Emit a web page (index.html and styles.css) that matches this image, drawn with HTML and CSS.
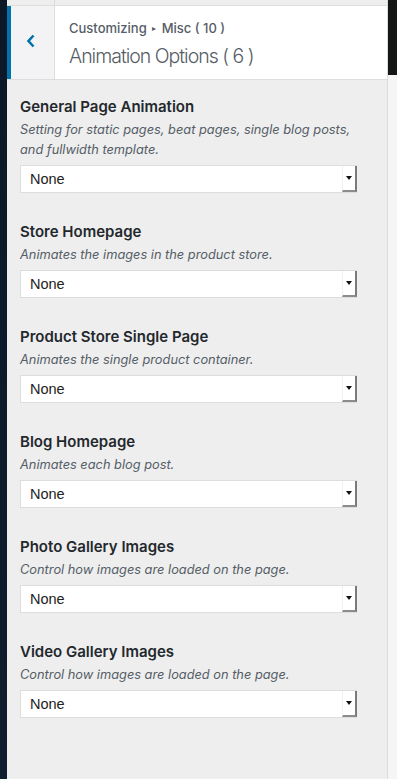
FILE: index.html
```html
<!DOCTYPE html>
<html>
<head>
<meta charset="utf-8">
<link rel="stylesheet" href="styles.css">
</head>
<body>
<div class="frame">
  <div class="edge"></div>
  <div class="panel">
    <div class="topstrip"><div class="topstrip-btn"></div></div>
    <div class="header">
      <button class="back" aria-label="Back">
        <svg width="10" height="14" viewBox="0 0 10 14"><path d="M7.5 1.5 L2.5 7 L7.5 12.5" fill="none" stroke="#0073aa" stroke-width="2.6"/></svg>
      </button>
      <div class="titles">
        <div class="crumb">Customizing <span class="sep">▸</span> Misc ( 10 )</div>
        <div class="title">Animation Options ( 6 )</div>
      </div>
    </div>
    <div class="controls">
      <div class="control">
        <div class="c-title">General Page Animation</div>
        <div class="c-desc">Setting for static pages, beat pages, single blog posts, and fullwidth template.</div>
        <div class="select"><span class="val">None</span><span class="arrow"><i></i></span></div>
      </div>
      <div class="control">
        <div class="c-title">Store Homepage</div>
        <div class="c-desc">Animates the images in the product store.</div>
        <div class="select"><span class="val">None</span><span class="arrow"><i></i></span></div>
      </div>
      <div class="control">
        <div class="c-title">Product Store Single Page</div>
        <div class="c-desc">Animates the single product container.</div>
        <div class="select"><span class="val">None</span><span class="arrow"><i></i></span></div>
      </div>
      <div class="control">
        <div class="c-title">Blog Homepage</div>
        <div class="c-desc">Animates each blog post.</div>
        <div class="select"><span class="val">None</span><span class="arrow"><i></i></span></div>
      </div>
      <div class="control">
        <div class="c-title">Photo Gallery Images</div>
        <div class="c-desc">Control how images are loaded on the page.</div>
        <div class="select"><span class="val">None</span><span class="arrow"><i></i></span></div>
      </div>
      <div class="control">
        <div class="c-title">Video Gallery Images</div>
        <div class="c-desc">Control how images are loaded on the page.</div>
        <div class="select"><span class="val">None</span><span class="arrow"><i></i></span></div>
      </div>
    </div>
  </div>
  <div class="side">
    <div class="side-dark"></div>
  </div>
</div>
</body>
</html>
```

FILE: styles.css
```css
* { box-sizing: border-box; }
html, body { margin: 0; padding: 0; }
body {
  width: 397px;
  height: 779px;
  overflow: hidden;
  font-family: Inter, "Open Sans", sans-serif;
  background: #eeeeee;
}
.frame {
  display: flex;
  height: 779px;
}
.edge {
  width: 7px;
  flex: none;
  background: linear-gradient(#0c1828, #101d2e);
}
.panel {
  width: 381px;
  flex: none;
  background: #eeeeee;
  border-right: 1px solid #dcdcdc;
  display: flex;
  flex-direction: column;
}
.topstrip {
  height: 6px;
  border-bottom: 1px solid #dddddd;
  display: flex;
}
.topstrip-btn {
  width: 48px;
  border-right: 1px solid #dddddd;
}
.header {
  height: 74px;
  display: flex;
  background: #ffffff;
  border-bottom: 1px solid #dddddd;
}
.back {
  width: 48px;
  flex: none;
  border: 0;
  border-left: 4px solid #0073aa;
  border-right: 1px solid #dddddd;
  background: #f3f3f5;
  padding: 0 4px 0 0;
  margin: 0;
  display: flex;
  align-items: center;
  justify-content: center;
}
.back svg { display: block; margin-top: -4px; }
.titles {
  padding: 12px 0 0 14px;
  color: #555d66;
}
.crumb {
  font-size: 13px;
  line-height: 20px;
  font-weight: 500;
  color: #555d66;
}
.crumb .sep { font-size: 8px; position: relative; top: -2px; padding: 0 2px; }
.title {
  font-size: 19.5px;
  line-height: 28px;
  font-weight: 300;
  color: #555d66;
  letter-spacing: -1px;
  margin-top: 2px;
}
.controls {
  padding: 17px 0 0 13px;
  display: flex;
  flex-direction: column;
  gap: 29px;
}
.c-title {
  font-size: 15px;
  line-height: 20px;
  font-weight: 600;
  color: #23282d;
  margin-bottom: 3px;
}
.c-desc {
  font-size: 12.8px;
  line-height: 20px;
  font-style: italic;
  color: #555d66;
  width: 345px;
  margin-bottom: 5px;
}
.select {
  width: 337px;
  height: 28px;
  background: #ffffff;
  border: 1px solid #dddddd;
  display: flex;
  align-items: center;
  justify-content: space-between;
}
.val {
  font-family: "Liberation Sans", Arial, sans-serif;
  font-size: 14.5px;
  color: #222222;
  padding-left: 9px;
}
.arrow {
  width: 15px;
  height: 26px;
  background: #ffffff;
  border-left: 1px solid #f0f0f0;
  border-right: 2px solid #7a7a7a;
  border-bottom: 2px solid #8c8c8c;
  margin-right: -1px;
  display: flex;
  align-items: center;
  justify-content: center;
}
.arrow i {
  width: 0;
  height: 0;
  border-left: 3px solid transparent;
  border-right: 3px solid transparent;
  border-top: 4px solid #111111;
  margin-right: 1px;
}
.side {
  flex: 1;
  background: #f5f5f5;
}
.side-dark {
  height: 75px;
  background: #141615;
}
```
